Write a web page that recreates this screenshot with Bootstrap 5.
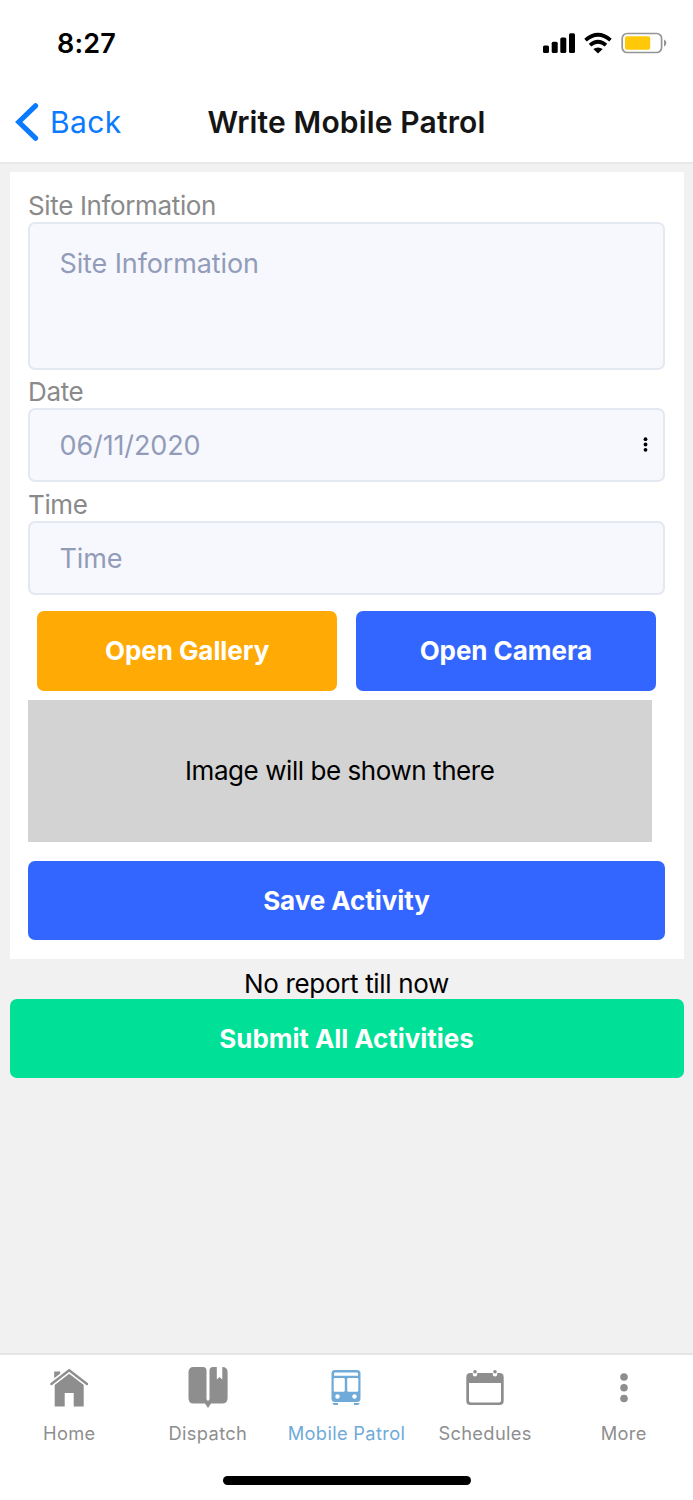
<!DOCTYPE html>
<html lang="en">
<head>
<meta charset="utf-8">
<meta name="viewport" content="width=device-width, initial-scale=1">
<title>Write Mobile Patrol</title>
<link rel="stylesheet" href="https://cdn.jsdelivr.net/npm/bootstrap@5.3.0/dist/css/bootstrap.min.css">
<style>
body { font-family: Inter, "Liberation Sans", sans-serif; background: #f1f1f1; color: #000; height: 1500px; overflow: hidden; }
svg { display: block; flex: none; }
.status-bar { height: 86px; padding: 0 26px 0 57px; }
.status-time { font-size: 27px; font-weight: 600; line-height: 34px; letter-spacing: .2px; padding-top: 1px; }
.title-bar { height: 78px; border-bottom: 2px solid #e8e8e8; padding: 0 15px 4px; }
.back-link { color: #0a7aff; font-size: 30px; line-height: 36px; letter-spacing: .4px; gap: 10px; }
.back-link svg { margin-top: -1px; }
.page-title { font-size: 30px; font-weight: 600; line-height: 36px; color: #151515; letter-spacing: .15px; }
.side-slot { width: 150px; }
.patrol-card { margin: 8px 9.5px 0; padding: 18px 18.5px 18.5px; }
.form-label { font-size: 26px; line-height: 32px; color: #8a8a8a; margin: 0; letter-spacing: -.36px; display: block; }
.form-control, .form-control:focus { background: #f7f8fd; border: 2px solid #e3e8f1; border-radius: 7px; color: #929cb9; font-size: 27px; line-height: 34px; letter-spacing: -.12px; padding: 18px 29.5px; height: 74px; }
.form-control::placeholder { color: #929cb9; opacity: 1; }
textarea.form-control { height: 147.5px; padding-top: 22.5px; resize: none; }
.field { margin-bottom: 6.75px; }
.field-menu { right: 17px; top: 29px; }
.btn { font-size: 26px; font-weight: 700; line-height: 32px; letter-spacing: -.06px; height: 79.500px; border: 0; border-radius: 7px; color: #fff; }
.btn-gallery { background: #ffaa05; }
.btn-blue { background: #3366ff; }
.btn-submit { background: #00e096; margin: 0 9.5px; height: 79px; }
.photo-actions { gap: 18.5px; padding: 0 9px; margin-top: 16.25px; }
.preview { width: 623.5px; height: 142px; background: #d3d3d3; font-size: 26px; letter-spacing: -.44px; margin: 9px 0 19px; }
.empty-note { font-size: 26px; line-height: 31px; letter-spacing: -.33px; padding: 9px 0 .500px; }
.tab-bar { height: 147px; border-top: 2px solid #e6e6e6; }
.tab-item { color: #8e8e8f; font-size: 18.3px; line-height: 24px; letter-spacing: .33px; padding-top: 9px; gap: 9px; }
.tab-item.active { color: #70aad8; }
.home-pill { width: 248px; height: 9px; bottom: 15.5px; background: #000; }
</style>
</head>
<body class="d-flex flex-column">
<div class="status-bar bg-white d-flex justify-content-between align-items-center">
  <span class="status-time">8:27</span>
  <svg width="125" height="24" viewBox="542 30.5 125 24">
    <g fill="#000">
      <rect x="543" y="45" width="6" height="7.5" rx="1.5"/><rect x="551.7" y="41.3" width="6" height="11.2" rx="1.5"/>
      <rect x="560.3" y="37" width="6" height="15.5" rx="1.5"/><rect x="569" y="32.7" width="6" height="19.8" rx="1.5"/>
      <path d="M593.3 48.5 Q598 45.3 602.7 48.5 L598 53Z"/>
    </g>
    <g fill="none" stroke="#000" stroke-width="3.7">
      <path d="M585.5 39.7 Q598 28.8 610.5 39.7"/><path d="M590 44.7 Q598 37.8 606 44.7"/>
    </g>
    <rect x="622.2" y="33" width="39.4" height="19" rx="5" fill="none" stroke="#959595" stroke-width="1.7"/>
    <rect x="625" y="35.8" width="25.2" height="13.4" rx="2" fill="#ffc90a"/>
    <path d="M664 39 q2.4 1.2 2.4 3.6 t-2.4 3.6z" fill="#959595"/>
  </svg>
</div>
<header class="title-bar bg-white d-flex align-items-center justify-content-between">
  <div class="side-slot"><a href="#" class="back-link d-flex align-items-center text-decoration-none">
    <svg width="25" height="38" viewBox="0 0 25 38"><path d="M20.500 2.800 3.800 19l16.700 16.200" fill="none" stroke="#0a7aff" stroke-width="5.200" stroke-linecap="round"/></svg>Back</a></div>
  <h1 class="page-title m-0 text-nowrap">Write Mobile Patrol</h1>
  <div class="side-slot"></div>
</header>
<main>
  <form class="patrol-card bg-white">
    <div class="field"><label class="form-label" for="site">Site Information</label>
      <textarea class="form-control" id="site" placeholder="Site Information"></textarea></div>
    <div class="field"><label class="form-label" for="date">Date</label>
      <div class="position-relative"><input class="form-control" id="date" value="06/11/2020">
        <svg class="field-menu position-absolute" width="5" height="15" viewBox="0 0 5 15"><circle cx="2.500" cy="2.200" r="1.900"/><circle cx="2.500" cy="7.500" r="1.900"/><circle cx="2.500" cy="12.800" r="1.900"/></svg></div></div>
    <div class="field"><label class="form-label" for="time">Time</label>
      <input class="form-control" id="time" placeholder="Time"></div>
    <div class="photo-actions d-flex">
      <button type="button" class="btn btn-gallery flex-fill w-50">Open Gallery</button>
      <button type="button" class="btn btn-blue flex-fill w-50">Open Camera</button>
    </div>
    <div class="preview d-flex align-items-center justify-content-center">Image will be shown there</div>
    <button type="button" class="btn btn-blue w-100 d-block">Save Activity</button>
  </form>
  <p class="empty-note text-center m-0">No report till now</p>
  <div class="d-grid"><button type="button" class="btn btn-submit">Submit All Activities</button></div>
</main>
<nav class="tab-bar bg-white mt-auto position-relative">
  <div class="row g-0 row-cols-5">
    <div class="col tab-item d-flex flex-column align-items-center">
      <svg width="40" height="48" viewBox="49.300 1364 40 48" fill="currentColor">
        <path d="M54.500 1380V1371.500h6v4l-6 5z"/>
        <path d="M55 1384.500 69.500 1373 84 1384.500V1406.500H74V1393H65v13.500H55z"/>
        <path d="M51.500 1384 69.500 1370.200 87.500 1384" fill="none" stroke="#fff" stroke-width="5.500"/>
        <path d="M51.700 1384 69.500 1370.200 87.300 1384" fill="none" stroke="currentColor" stroke-width="2.400" stroke-linecap="round"/>
      </svg>Home</div>
    <div class="col tab-item d-flex flex-column align-items-center">
      <svg width="40" height="48" viewBox="188 1364 40 48" fill="currentColor">
        <path d="M193.500 1367H203q3.500 0 3.500 3.500V1399q.300 1.800 1.500 1.800t1.500-1.800v-28.500q0-3.500 3.500-3.500h3.800v12.500l2.700-2.500 2.800 2.500V1367q5.300 0 5.300 5.500v25.500q0 5.500-5.500 5.500H211l-3 4.500-3-4.500h-11.500q-5 0-5-5.500v-25.500q0-5.500 5-5.500z"/>
      </svg>Dispatch</div>
    <div class="col tab-item active d-flex flex-column align-items-center">
      <svg width="40" height="48" viewBox="326.500 1364 40 48" fill="currentColor">
        <path fill-rule="evenodd" d="M335.500 1370h22q3.500 0 3.500 3.500v25q0 3.500-3.500 3.500h-22q-3.500 0-3.500-3.500v-25q0-3.500 3.500-3.500zM335.500 1372.500q-1 0-1 1v2.200h24v-2.200q0-1-1-1zM335.500 1378q-1.300 0-1.300 1.300v11.200q0 1.300 1.300 1.300h8.500q1.300 0 1.300-1.300v-11.200q0-1.300-1.300-1.300zM349 1378q-1.300 0-1.300 1.300v11.200q0 1.300 1.300 1.300h8.500q1.300 0 1.300-1.300v-11.200q0-1.300-1.300-1.300z"/>
        <circle cx="338" cy="1396.500" r="2.200" fill="#fff"/><circle cx="355" cy="1396.500" r="2.200" fill="#fff"/>
        <path d="M333 1403h5.500v2h-3.500q-2 0-2-2zM354.500 1403h5.500q0 2-2 2h-3.500z"/>
      </svg>Mobile Patrol</div>
    <div class="col tab-item d-flex flex-column align-items-center">
      <svg width="40" height="48" viewBox="465 1364 40 48" fill="currentColor">
        <path fill-rule="evenodd" d="M470.500 1373h29q4.200 0 4.200 4.200v23.500q0 4.300-4.200 4.300h-29q-4.200 0-4.200-4.300v-23.500q0-4.200 4.200-4.200zM469 1383v17.500q0 2 2 2h28q2 0 2-2V1383z"/>
        <rect x="472.800" y="1369.500" width="4.400" height="7" rx="2.200" fill="#fff"/><rect x="492.800" y="1369.500" width="4.400" height="7" rx="2.200" fill="#fff"/>
        <circle cx="475" cy="1371.700" r="1.800"/><circle cx="495" cy="1371.700" r="1.800"/>
      </svg>Schedules</div>
    <div class="col tab-item d-flex flex-column align-items-center">
      <svg width="40" height="48" viewBox="603.700 1364 40 48" fill="currentColor"><circle cx="623.700" cy="1377" r="3.800"/><circle cx="623.700" cy="1387.700" r="3.800"/><circle cx="623.700" cy="1398.500" r="3.800"/></svg>More</div>
  </div>
  <div class="home-pill rounded-pill position-absolute start-50 translate-middle-x"></div>
</nav>
<script src="https://cdn.jsdelivr.net/npm/bootstrap@5.3.0/dist/js/bootstrap.bundle.min.js"></script>
</body>
</html>
